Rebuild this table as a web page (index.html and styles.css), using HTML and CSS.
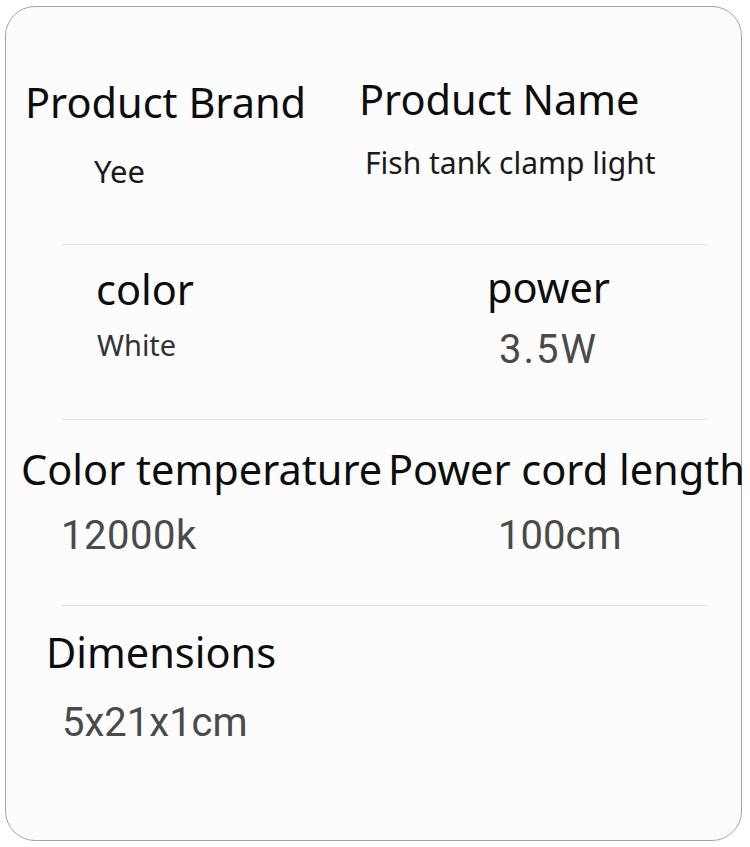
FILE: index.html
```html
<!DOCTYPE html>
<html>
<head>
<meta charset="utf-8">
<link rel="stylesheet" href="styles.css">
</head>
<body>
<div class="card">
  <div class="row row1">
    <div class="cell c-brand">
      <div class="label">Product Brand</div>
      <div class="val-sm v-brand">Yee</div>
    </div>
    <div class="cell c-name">
      <div class="label">Product Name</div>
      <div class="val-sm v-name">Fish tank clamp light</div>
    </div>
  </div>
  <div class="divider"></div>
  <div class="row row2">
    <div class="cell c-color">
      <div class="label">color</div>
      <div class="val-sm v-color">White</div>
    </div>
    <div class="cell c-power">
      <div class="label">power</div>
      <div class="val-lg v-power">3.5W</div>
    </div>
  </div>
  <div class="divider"></div>
  <div class="row row3">
    <div class="cell c-temp">
      <div class="label">Color temperature</div>
      <div class="val-lg v-temp">12000k</div>
    </div>
    <div class="cell c-cord">
      <div class="label">Power cord length</div>
      <div class="val-lg v-cord">100cm</div>
    </div>
  </div>
  <div class="divider"></div>
  <div class="row row4">
    <div class="cell c-dim">
      <div class="label">Dimensions</div>
      <div class="val-lg v-dim">5x21x1cm</div>
    </div>
  </div>
</div>
</body>
</html>
```
FILE: styles.css
```css
html, body {
  margin: 0;
  padding: 0;
  background: #ffffff;
}
body {
  font-family: "Noto Sans", "Open Sans", sans-serif;
}
.card {
  box-sizing: border-box;
  margin: 6px 0 0 5px;
  width: 737px;
  height: 835px;
  border: 1px solid #a4a4a4;
  border-radius: 30px;
  background: #fcfcfc;
}
.row {
  display: grid;
  grid-template-columns: 340px 1fr;
  box-sizing: border-box;
}
.row1 { height: 237px; }
.row2 { height: 174px; }
.row3 { height: 185px; }
.row4 { height: 200px; }
.divider {
  height: 1px;
  margin-left: 56px;
  width: 646px;
  background: #e3e3e3;
}
.cell {
  white-space: nowrap;
}
.label {
  font-size: 41.5px;
  line-height: 46px;
  color: #0d0d0d;
}
.val-sm {
  font-size: 29px;
  line-height: 36px;
  color: #1a1a1a;
}
.val-lg {
  font-family: Roboto, "Noto Sans", sans-serif;
  font-size: 40px;
  line-height: 46px;
  color: #4a4a4a;
}

.c-brand { padding: 72px 0 0 19px; }
.v-brand { margin: 28px 0 0 69px; font-size: 31px; }
.c-name { padding: 69px 0 0 13px; }
.v-name { margin: 23px 0 0 6px; font-size: 30px; }

.c-color { padding: 21px 0 0 90px; }
.v-color { margin: 15px 0 0 1px; color: #333333; }
.c-power { padding: 19px 0 0 141px; }
.v-power { margin: 17px 0 0 12px; letter-spacing: 2px; }

.c-temp { padding: 26px 0 0 15px; }
.v-temp { margin: 21px 0 0 40px; letter-spacing: 0.5px; }
.c-cord { padding: 26px 0 0 42px; }
.v-cord { margin: 21px 0 0 110px; }

.c-dim { padding: 23px 0 0 40px; }
.v-dim { margin: 25px 0 0 16px; }
```
